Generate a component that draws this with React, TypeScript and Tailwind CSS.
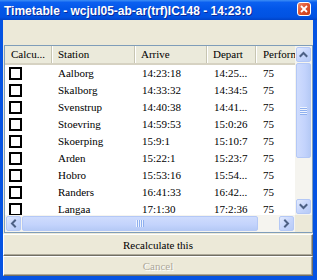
import React from "react";

const rows: [string, string, string, string][] = [
  ["Aalborg", "14:23:18", "14:25...", "75"],
  ["Skalborg", "14:33:32", "14:34:5", "75"],
  ["Svenstrup", "14:40:38", "14:41...", "75"],
  ["Stoevring", "14:59:53", "15:0:26", "75"],
  ["Skoerping", "15:9:1", "15:10:7", "75"],
  ["Arden", "15:22:1", "15:23:7", "75"],
  ["Hobro", "15:53:16", "15:54...", "75"],
  ["Randers", "16:41:33", "16:42...", "75"],
  ["Langaa", "17:1:30", "17:2:36", "75"],
];

function Chevron({ dir }: { dir: "up" | "down" | "left" | "right" }) {
  const pts: Record<string, string> = {
    up: "1.5,6 4.5,3 7.5,6",
    down: "1.5,3 4.5,6 7.5,3",
    left: "6,1.5 3,4.5 6,7.5",
    right: "3,1.5 6,4.5 3,7.5",
  };
  return (
    <svg width="9" height="9" viewBox="0 0 9 9">
      <polyline points={pts[dir]} fill="none" stroke="#4d6185" strokeWidth="2" strokeLinecap="square" />
    </svg>
  );
}

function ScrollBtn({ dir }: { dir: "up" | "down" | "left" | "right" }) {
  return (
    <div className="w-[17px] h-[17px] shrink-0 p-[1px]">
      <div className="w-full h-full rounded-[2px] border border-[#b4c8f6] bg-[linear-gradient(135deg,#e3ebfe_0%,#c7d6fc_50%,#b7cbf6_100%)] flex items-center justify-center">
        <Chevron dir={dir} />
      </div>
    </div>
  );
}

function GripV() {
  return (
    <div className="flex flex-col">
      {[0, 1, 2, 3].map((i) => (
        <div key={i} className="flex flex-col">
          <div className="w-[7px] h-[1px] bg-[#eef3fe]" />
          <div className="w-[7px] h-[1px] bg-[#8fb0ef]" />
        </div>
      ))}
    </div>
  );
}

function GripH() {
  return (
    <div className="flex flex-row">
      {[0, 1, 2, 3].map((i) => (
        <div key={i} className="flex flex-row">
          <div className="w-[1px] h-[7px] bg-[#eef3fe]" />
          <div className="w-[1px] h-[7px] bg-[#8fb0ef]" />
        </div>
      ))}
    </div>
  );
}

const cols = [47, 83, 72, 49, 80];

export default function App() {
  const serif = "font-['Liberation_Serif','Times_New_Roman',serif] text-[11px] text-black";
  return (
    <div className="w-[317px] h-[280px] bg-[#0553e2] flex flex-col overflow-hidden">
      <div className="h-[20px] shrink-0 flex items-start justify-between pl-[4px] pr-[6px] bg-[linear-gradient(180deg,#3d8ef5_0%,#0b60f0_12%,#0256e8_45%,#0152e2_85%,#0043c8_100%)]">
        <span className="pt-[4px] text-white font-bold text-[12px] leading-[14px] font-['Liberation_Sans',Arial,sans-serif] whitespace-nowrap [text-shadow:1px_1px_0_#0a2a9a]">
          Timetable - wcjul05-ab-ar(trf)IC148 - 14:23:0
        </span>
        <div className="mt-[2px] w-[14px] h-[14px] rounded-[3px] border border-white bg-[linear-gradient(135deg,#ef8a6c_0%,#e0542f_45%,#c73b16_100%)] flex items-center justify-center">
          <svg width="8" height="8" viewBox="0 0 8 8">
            <line x1="1" y1="1" x2="7" y2="7" stroke="white" strokeWidth="1.8" />
            <line x1="7" y1="1" x2="1" y2="7" stroke="white" strokeWidth="1.8" />
          </svg>
        </div>
      </div>
      <div className="flex-1 ml-[3px] mr-[4px] mb-[4px] bg-[#ece9d8] flex flex-col">
        <div className="h-[25px] shrink-0" />
        <div className="ml-[1px] h-[188px] shrink-0 border border-[#7f9db9] bg-white grid grid-cols-[290px_17px] grid-rows-[169px_17px]">
          <div className="overflow-hidden">
            <div className="flex h-[19px] bg-[#ebeadb] border-b-2 border-[#d6d2c2]">
              {["Calcu...", "Station", "Arrive", "Depart", "Performance"].map((h, i) => (
                <div
                  key={h}
                  style={{ width: cols[i] }}
                  className={`shrink-0 flex items-center ${i === 4 ? "pl-[7px]" : "pl-[6px]"} whitespace-nowrap overflow-hidden ${serif} ${i < 4 ? "border-r border-[#c7c5b2] shadow-[1px_0_0_#ffffff]" : ""}`}
                >
                  {h}
                </div>
              ))}
            </div>
            {rows.map((r) => (
              <div key={r[0]} className={`flex h-[17px] items-center ${serif}`}>
                <div style={{ width: cols[0] }} className="shrink-0 pl-[4px] flex items-center">
                  <div className="w-[13px] h-[13px] border-2 border-black bg-white" />
                </div>
                <div style={{ width: cols[1] }} className="shrink-0 pl-[6px] whitespace-nowrap">{r[0]}</div>
                <div style={{ width: cols[2] }} className="shrink-0 pl-[7px] whitespace-nowrap">{r[1]}</div>
                <div style={{ width: cols[3] }} className="shrink-0 pl-[7px] whitespace-nowrap">{r[2]}</div>
                <div style={{ width: cols[4] }} className="shrink-0 pl-[7px] whitespace-nowrap">{r[3]}</div>
              </div>
            ))}
          </div>
          <div className="flex flex-col bg-[#f5f4ef]">
            <ScrollBtn dir="up" />
            <div className="h-[95px] shrink-0 px-[1px]">
              <div className="w-full h-full rounded-[2px] border border-[#b4c8f6] bg-[linear-gradient(90deg,#cfdcfd_0%,#c3d3fc_60%,#b6caf6_100%)] flex items-center justify-center">
                <GripV />
              </div>
            </div>
            <div className="flex-1" />
            <ScrollBtn dir="down" />
          </div>
          <div className="flex flex-row bg-[#f5f4ef]">
            <ScrollBtn dir="left" />
            <div className="w-[236px] shrink-0 py-[1px]">
              <div className="w-full h-full rounded-[2px] border border-[#b4c8f6] bg-[linear-gradient(180deg,#cfdcfd_0%,#c3d3fc_60%,#b6caf6_100%)] flex items-center justify-center">
                <GripH />
              </div>
            </div>
            <div className="flex-1" />
            <ScrollBtn dir="right" />
          </div>
          <div className="bg-[#ece9d8]" />
        </div>
        <div className="h-[1px] shrink-0" />
        <div className={`h-[22px] shrink-0 flex items-center justify-center border-t border-l border-t-white border-l-white border-b border-r border-b-[#716f64] border-r-[#716f64] shadow-[inset_-1px_-1px_0_#aca899] ${serif}`}>
          Recalculate this
        </div>
        <div className={`h-[20px] shrink-0 flex items-center justify-center border-t border-l border-t-white border-l-white border-b border-r border-b-[#716f64] border-r-[#716f64] shadow-[inset_-1px_-1px_0_#aca899] font-['Liberation_Serif','Times_New_Roman',serif] text-[11px] text-[#aca899] [text-shadow:1px_1px_0_#ffffff]`}>
          Cancel
        </div>
      </div>
    </div>
  );
}
